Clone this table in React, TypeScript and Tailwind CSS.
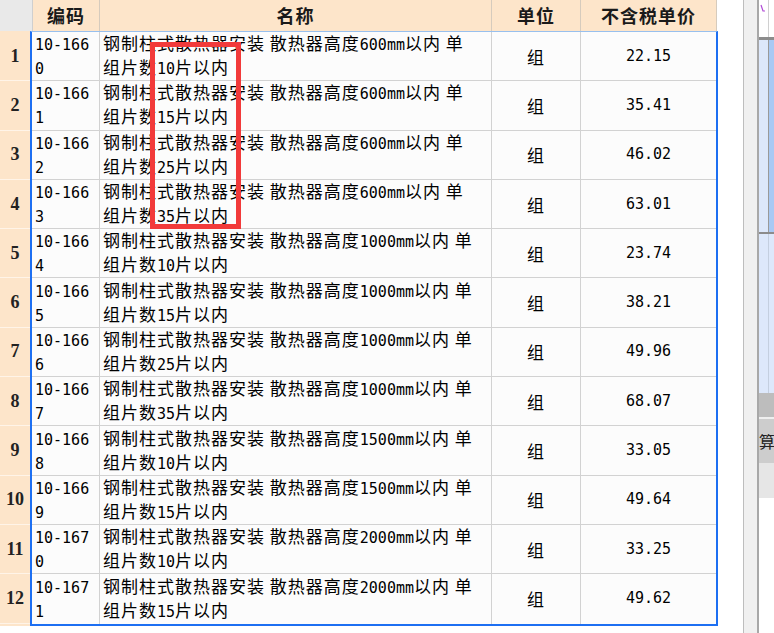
import React from "react";

interface Item {
  code: string;
  height: string;
  pieces: string;
  price: string;
}

const items: Item[] = [
  { code: "10-1660", height: "600", pieces: "10", price: "22.15" },
  { code: "10-1661", height: "600", pieces: "15", price: "35.41" },
  { code: "10-1662", height: "600", pieces: "25", price: "46.02" },
  { code: "10-1663", height: "600", pieces: "35", price: "63.01" },
  { code: "10-1664", height: "1000", pieces: "10", price: "23.74" },
  { code: "10-1665", height: "1000", pieces: "15", price: "38.21" },
  { code: "10-1666", height: "1000", pieces: "25", price: "49.96" },
  { code: "10-1667", height: "1000", pieces: "35", price: "68.07" },
  { code: "10-1668", height: "1500", pieces: "10", price: "33.05" },
  { code: "10-1669", height: "1500", pieces: "15", price: "49.64" },
  { code: "10-1670", height: "2000", pieces: "10", price: "33.25" },
  { code: "10-1671", height: "2000", pieces: "15", price: "49.62" },
];

// half-width latin parts look like SimSun: narrow mono
const Mixed = ({ text }: { text: string }) => (
  <>
    {text.split(/([0-9A-Za-z.\-]+)/).map((part, i) =>
      /[0-9A-Za-z]/.test(part) ? (
        <span key={i} className="font-['DejaVu_Sans_Mono',monospace] text-[15px] tracking-normal">
          {part}
        </span>
      ) : (
        <span key={i}>{part}</span>
      )
    )}
  </>
);

const App = () => {
  return (
    <div className="w-[774px] h-[633px] overflow-hidden bg-white flex font-['Noto_Sans_CJK_SC',sans-serif] text-black">
      {/* Table */}
      <div className="w-[718px] shrink-0 flex flex-col relative">
        {/* Header */}
        <div className="flex h-[31px] w-[717px] text-[18px] font-bold tracking-[1px] text-[#1a1a1a]">
          <div className="w-[33px] bg-[#e9e9e9] border-r border-[#cfcfcf]" />
          <div className="w-[67px] bg-[#fde5ca] border-r border-[#d6cbbd] flex items-center justify-center">编码</div>
          <div className="w-[392px] bg-[#fde5ca] border-r border-[#d6cbbd] flex items-center justify-center">名称</div>
          <div className="w-[89px] bg-[#fde5ca] border-r border-[#d6cbbd] flex items-center justify-center">单位</div>
          <div className="w-[136px] bg-[#fde5ca] border-r border-[#d6cbbd] flex items-center justify-center">不含税单价</div>
        </div>

        <div className="flex">
          {/* Row numbers */}
          <div className="w-[30px] pt-[1px] flex flex-col bg-[#fde5ca]">
            {items.map((_, i) => (
              <div
                key={i}
                className="h-[49.3px] border-b border-[#fff4e8] flex items-center justify-center font-['Liberation_Serif',serif] font-bold text-[18px] text-[#222]"
              >
                {i + 1}
              </div>
            ))}
          </div>

          {/* Body */}
          <div className="w-[688px] border-t border-t-[#98c0ee] border-x-2 border-b-2 border-x-[#1d6ff2] border-b-[#1d6ff2] bg-[#fcfcfc] text-[17px] tracking-[1px] leading-[21px]">
            {items.map((it, i) => (
              <div
                key={it.code}
                className={`flex h-[49.3px] ${i < items.length - 1 ? "border-b border-[#d2d2d2]" : ""}`}
              >
                <div className="w-[68px] border-r border-[#d2d2d2] pl-[3px] flex flex-col justify-center">
                  <span><Mixed text={it.code.slice(0, 6)} /></span>
                  <span><Mixed text={it.code.slice(6)} /></span>
                </div>
                <div className="w-[392px] border-r border-[#d2d2d2] pl-[3px] flex flex-col justify-center whitespace-pre">
                  <span><Mixed text={`钢制柱式散热器安装 散热器高度${it.height}mm以内 单`} /></span>
                  <span><Mixed text={`组片数${it.pieces}片以内`} /></span>
                </div>
                <div className="w-[89px] border-r border-[#d2d2d2] flex items-center justify-center">组</div>
                <div className="w-[135px] flex items-center justify-center">
                  <Mixed text={it.price} />
                </div>
              </div>
            ))}
          </div>
        </div>

        {/* red annotation box */}
        <div className="absolute left-[150px] top-[42px] w-[91px] h-[187px] border-[5px] border-[#f23a3a]" />
      </div>

      {/* gap */}
      <div className="w-[25px] shrink-0" />

      {/* scroll strip */}
      <div className="w-[16px] shrink-0 border-l border-[#bdbdbd] border-r-2 border-r-[#a8a8a8] bg-[#f0f0f0]" />

      {/* right panel edge */}
      <div className="w-[15px] shrink-0 flex flex-col overflow-hidden">
        <div className="h-[37px] bg-white flex">
          <div className="w-[9px] pt-[4px] pl-[1px]">
            <svg width="6" height="9" viewBox="0 0 6 9">
              <path d="M1 1 L3 7 L5 7" stroke="#b04ad6" strokeWidth="1.2" fill="none" />
            </svg>
          </div>
          <div className="w-[1px] bg-[#d0d0d0]" />
        </div>
        <div className="h-[3px] bg-[#8c8c8c]" />
        <div className="h-[192px] bg-[#dde8fb] flex">
          <div className="w-[9px]" />
          <div className="w-[1px] bg-[#9a9a9a]" />
          <div className="flex-1 bg-[#a9c9f4]" />
        </div>
        <div className="h-[2px] bg-[#8c8c8c]" />
        <div className="h-[159px] bg-[#dde8fb] flex">
          <div className="w-[9px]" />
          <div className="w-[1px] bg-[#c4cfe0]" />
        </div>
        <div className="h-[24px] bg-[#bdbdbd]" />
        <div className="h-[2px] bg-[#efefef]" />
        <div className="h-[44px] bg-[#cdcdcd] flex items-center overflow-hidden">
          <span className="text-[16px] leading-[20px] text-[#222]">算</span>
        </div>
        <div className="h-[35px] bg-[#e6e6e6]" />
        <div className="flex-1 bg-white" />
      </div>
    </div>
  );
};

export default App;
